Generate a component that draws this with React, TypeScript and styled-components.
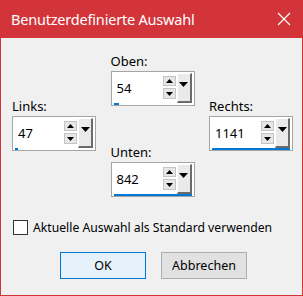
import React from "react";
import styled, { createGlobalStyle } from "styled-components";

const GlobalStyle = createGlobalStyle`
  html, body {
    margin: 0;
    padding: 0;
    background: #f0f0f0;
  }
  body {
    font-family: "Noto Sans", "Open Sans", sans-serif;
  }
`;

interface SpinField {
  label: string;
  value: number;
  max: number;
}

const Window = styled.div`
  width: 303px;
  height: 296px;
  box-sizing: border-box;
  border: 1px solid #d2343a;
  border-top: none;
  display: flex;
  flex-direction: column;
  background: #f0f0f0;
`;

const TitleBar = styled.div`
  height: 37px;
  margin: 0 -1px;
  background: #d2343a;
  color: #ffffff;
  display: flex;
  align-items: center;
  justify-content: space-between;
  padding: 0 11px 1px 11px;
  font-size: 14.5px;
  letter-spacing: -0.2px;
`;

const CloseBtn = styled.div`
  width: 14px;
  height: 14px;
  display: flex;
  margin-right: 1px;
`;

const Body = styled.div`
  flex: 1;
  display: flex;
  flex-direction: column;
  padding: 0 0 0 11px;
`;

const Grid = styled.div`
  display: grid;
  grid-template-columns: 84px 84px 84px;
  column-gap: 14.5px;
  height: 175px;
`;

const Column = styled.div<{ $top: number }>`
  display: flex;
  flex-direction: column;
  padding-top: ${(p) => p.$top}px;
  gap: 38px;
`;

const Field = styled.div`
  display: flex;
  flex-direction: column;
`;

const Label = styled.div`
  font-size: 13px;
  line-height: 17px;
  color: #000;
  height: 17px;
  margin-bottom: 1px;
`;

const SpinBox = styled.div`
  box-sizing: border-box;
  width: 84px;
  height: 35px;
  border: 1px solid #a5a5a5;
  background: #ffffff;
  padding: 1px;
  display: flex;
  flex-direction: column;
`;

const SpinRow = styled.div`
  height: 30px;
  display: flex;
  align-items: flex-start;
`;

const Value = styled.div`
  flex: 1;
  height: 30px;
  line-height: 31px;
  padding-left: 4px;
  font-size: 13px;
  color: #000;
`;

const Arrows = styled.div`
  width: 13px;
  margin-top: 3px;
  margin-right: 1px;
  display: flex;
  flex-direction: column;
  gap: 2px;
`;

const ArrowBtn = styled.div<{ $h: number }>`
  box-sizing: border-box;
  height: ${(p) => p.$h}px;
  background: #e6e6e6;
  border: 1px solid #c4c4c4;
  display: flex;
  align-items: center;
  justify-content: center;
`;

const DropBtn = styled.div`
  box-sizing: border-box;
  width: 15px;
  height: 30px;
  background: #eaeaea;
  border-top: 1px solid #ffffff;
  border-left: 1px solid #ffffff;
  border-right: 2px solid #6b6b6b;
  border-bottom: 2px solid #6b6b6b;
  display: flex;
  justify-content: center;
  padding-top: 8px;
  margin-right: 1px;
`;

const Bar = styled.div`
  height: 2px;
  margin: 0 1px;
  display: flex;
`;

const BarFill = styled.div`
  height: 2px;
  background: #0078d7;
`;

const CheckRow = styled.label`
  display: flex;
  align-items: center;
  gap: 5px;
  margin-top: 6px;
  font-size: 12.2px;
  color: #000;
  height: 16px;
`;

const CheckBox = styled.span`
  box-sizing: border-box;
  width: 15px;
  height: 15px;
  border: 1px solid #333333;
  background: #ffffff;
  margin-left: 1px;
`;

const Buttons = styled.div`
  display: flex;
  gap: 15px;
  margin-top: 17px;
  padding-left: 48px;
`;

const Button = styled.div<{ $primary?: boolean }>`
  box-sizing: border-box;
  width: 86px;
  height: 27px;
  display: flex;
  align-items: center;
  justify-content: center;
  font-size: 12.5px;
  color: #000;
  background: ${(p) => (p.$primary ? "#e5f1fb" : "#e1e1e1")};
  border: 1px solid ${(p) => (p.$primary ? "#0078d7" : "#adadad")};
`;

const Tri = ({ up, w = 7, h = 4 }: { up?: boolean; w?: number; h?: number }) => (
  <svg width={w} height={h} viewBox={`0 0 ${w} ${h}`}>
    <polygon
      points={up ? `0,${h} ${w},${h} ${w / 2},0` : `0,0 ${w},0 ${w / 2},${h}`}
      fill="#000"
    />
  </svg>
);

const Spin = ({ f }: { f: SpinField }) => (
  <Field>
    <Label>{f.label}</Label>
    <SpinBox>
      <SpinRow>
        <Value>{f.value}</Value>
        <Arrows>
          <ArrowBtn $h={10}>
            <Tri up w={7} h={4} />
          </ArrowBtn>
          <ArrowBtn $h={11}>
            <Tri w={7} h={4} />
          </ArrowBtn>
        </Arrows>
        <DropBtn>
          <Tri w={9} h={5} />
        </DropBtn>
      </SpinRow>
      <Bar>
        <BarFill style={{ width: `${Math.round((f.value / f.max) * 80)}px` }} />
      </Bar>
    </SpinBox>
  </Field>
);

const links: SpinField = { label: "Links:", value: 47, max: 1141 };
const oben: SpinField = { label: "Oben:", value: 54, max: 842 };
const rechts: SpinField = { label: "Rechts:", value: 1141, max: 1141 };
const unten: SpinField = { label: "Unten:", value: 842, max: 842 };

export default function App() {
  return (
    <>
      <GlobalStyle />
      <Window>
        <TitleBar>
          <span>Benutzerdefinierte Auswahl</span>
          <CloseBtn>
            <svg width="14" height="14" viewBox="0 0 14 14">
              <path d="M1 1 L13 13 M13 1 L1 13" stroke="#fff" strokeWidth="1.2" />
            </svg>
          </CloseBtn>
        </TitleBar>
        <Body>
          <Grid>
            <Column $top={60}>
              <Spin f={links} />
            </Column>
            <Column $top={15}>
              <Spin f={oben} />
              <Spin f={unten} />
            </Column>
            <Column $top={60}>
              <Spin f={rechts} />
            </Column>
          </Grid>
          <CheckRow>
            <CheckBox />
            Aktuelle Auswahl als Standard verwenden
          </CheckRow>
          <Buttons>
            <Button $primary>OK</Button>
            <Button>Abbrechen</Button>
          </Buttons>
        </Body>
      </Window>
    </>
  );
}
